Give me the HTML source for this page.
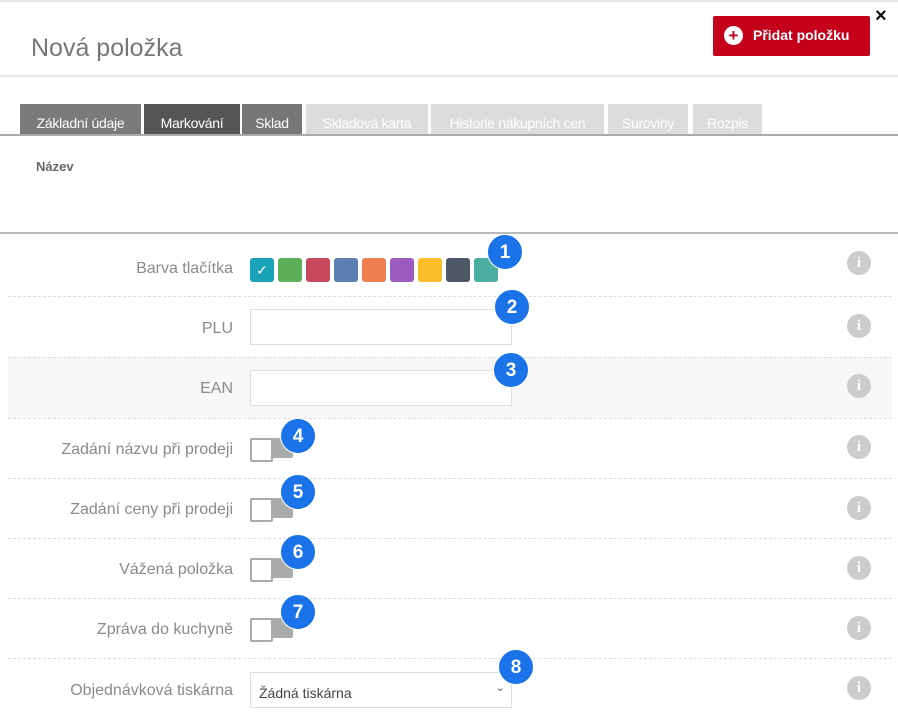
<!DOCTYPE html>
<html><head><meta charset="utf-8"><style>
*{box-sizing:border-box;margin:0;padding:0}
body{width:898px;height:725px;background:#fff;font-family:"Liberation Sans",sans-serif;position:relative;overflow:hidden}
.a{position:absolute}
.tab{position:absolute;top:104px;height:30px;color:#fff;font-size:14px;line-height:38px;text-align:center;white-space:nowrap;overflow:hidden;letter-spacing:-0.3px}
.lbl{position:absolute;right:665px;font-size:16px;color:#8a8a8a;white-space:nowrap}
.dash{position:absolute;left:8px;width:884px;border-top:1px dashed #ddd}
.sw{position:absolute;top:258px;width:24px;height:24px;border-radius:3px}
.b{position:absolute;width:36px;height:36px;border-radius:50%;background:#1a73e8;color:#fff;font-weight:bold;font-size:19px;text-align:center;line-height:36px;border:1px solid #fff}
.inp{position:absolute;left:250px;width:262px;height:36px;border:1px solid #ddd;background:#fff}
.tg{position:absolute;left:250px;width:43px;height:20px;background:#aaa;border-radius:2px}
.tg:before{content:"";position:absolute;left:0;top:0;width:19px;height:20px;background:#fff;border:2px solid #aaa;border-radius:2px}
.i{position:absolute;left:847px;width:24px;height:24px;border-radius:50%;background:#ccc;color:#fff;font-family:"Liberation Serif",serif;font-weight:bold;font-size:15px;text-align:center;line-height:24px}
</style></head><body>
<div class="a" style="left:0;top:0;width:898px;height:2px;background:#e5e5e5"></div>
<div class="a" style="left:31px;top:34px;font-size:25px;color:#777">Nová položka</div>
<div class="a" style="left:713px;top:16px;width:157px;height:40px;background:#c4001a;border-radius:2px;color:#fff;font-weight:bold;font-size:14px;line-height:38px">
<span style="position:absolute;left:11px;top:10px;width:19px;height:19px;border-radius:50%;background:#fff;color:#c4001a;font-size:17px;line-height:19px;text-align:center">+</span><span style="position:absolute;left:40px">Přidat položku</span></div>
<div class="a" style="left:875px;top:5px;font-size:20px;font-weight:bold;color:#111">×</div>
<div class="a" style="left:0;top:75px;width:898px;height:2px;background:#e5e5e5"></div>
<div class="tab" style="left:20px;width:121px;background:#7a7a7a">Základní údaje</div>
<div class="tab" style="left:144px;width:96px;background:#555">Markování</div>
<div class="tab" style="left:242px;width:60px;background:#777">Sklad</div>
<div class="tab" style="left:306px;width:122px;background:#dcdcdc">Skladová karta</div>
<div class="tab" style="left:431px;width:173px;background:#dcdcdc">Historie nákupních cen</div>
<div class="tab" style="left:608px;width:80px;background:#dcdcdc">Suroviny</div>
<div class="tab" style="left:693px;width:69px;background:#dcdcdc">Rozpis</div>
<div class="a" style="left:0;top:134px;width:898px;height:2px;background:#aaa"></div>
<div class="a" style="left:36px;top:159px;font-size:13px;font-weight:bold;color:#666">Název</div>
<div class="a" style="left:0;top:232px;width:898px;height:2px;background:#bbb"></div>
<div class="a" style="left:8px;top:357px;width:884px;height:61px;background:#f7f7f7"></div>
<div class="dash" style="top:296px"></div><div class="dash" style="top:357px"></div><div class="dash" style="top:418px"></div><div class="dash" style="top:478px"></div><div class="dash" style="top:538px"></div><div class="dash" style="top:598px"></div><div class="dash" style="top:658px"></div>
<div class="lbl" style="top:260px">Barva tlačítka</div>
<div class="lbl" style="top:320px">PLU</div>
<div class="lbl" style="top:380px">EAN</div>
<div class="lbl" style="top:441px">Zadání názvu při prodeji</div>
<div class="lbl" style="top:501px">Zadání ceny při prodeji</div>
<div class="lbl" style="top:561px">Vážená položka</div>
<div class="lbl" style="top:621px">Zpráva do kuchyně</div>
<div class="lbl" style="top:682px">Objednávková tiskárna</div>
<div class="sw" style="left:250px;background:#1aa3b8;color:#fff;font-size:14px;text-align:center;line-height:24px">✓</div>
<div class="sw" style="left:278px;background:#5cb05c"></div>
<div class="sw" style="left:306px;background:#c9485b"></div>
<div class="sw" style="left:334px;background:#5b7fb0"></div>
<div class="sw" style="left:362px;background:#ef7f52"></div>
<div class="sw" style="left:390px;background:#9b5bbf"></div>
<div class="sw" style="left:418px;background:#fbbd2b"></div>
<div class="sw" style="left:446px;background:#4e5765"></div>
<div class="sw" style="left:474px;background:#4aada0"></div>
<div class="inp" style="top:309px"></div>
<div class="inp" style="top:370px"></div>
<div class="tg" style="top:438px"></div><div class="tg" style="top:498px"></div><div class="tg" style="top:558px"></div><div class="tg" style="top:618px"></div>
<div class="inp" style="top:672px;font-size:14px;color:#444;padding:12px 0 0 8px">Žádná tiskárna<span style="position:absolute;right:6px;top:8px;font-size:11px;color:#555">⌄</span></div>
<div class="b" style="left:487px;top:234px">1</div>
<div class="b" style="left:494px;top:289px">2</div>
<div class="b" style="left:493px;top:352px">3</div>
<div class="b" style="left:280px;top:418px">4</div>
<div class="b" style="left:280px;top:474px">5</div>
<div class="b" style="left:280px;top:534px">6</div>
<div class="b" style="left:280px;top:594px">7</div>
<div class="b" style="left:498px;top:649px">8</div>
<div class="i" style="top:251px">i</div><div class="i" style="top:314px">i</div><div class="i" style="top:374px">i</div><div class="i" style="top:435px">i</div><div class="i" style="top:496px">i</div><div class="i" style="top:556px">i</div><div class="i" style="top:616px">i</div><div class="i" style="top:676px">i</div>
</body></html>
